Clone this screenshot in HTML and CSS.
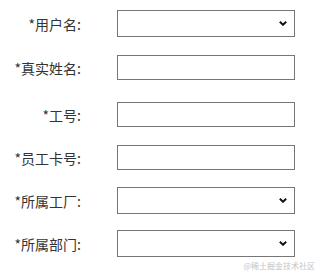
FILE: index.html
```html
<!DOCTYPE html>
<html lang="zh">
<head>
<meta charset="utf-8">
<link rel="stylesheet" href="styles.css">
</head>
<body>
<form class="form">
  <div class="row row-first">
    <label class="label">*用户名:</label>
    <div class="select-wrap">
      <select class="control select"><option></option></select>
      <svg class="chev" width="8" height="5" viewBox="0 0 8 5"><path d="M0.8 0.8 L4 3.8 L7.2 0.8" fill="none" stroke="#111" stroke-width="1.9"/></svg>
    </div>
  </div>
  <div class="row row-wide">
    <label class="label">*真实姓名:</label>
    <input class="control input" type="text">
  </div>
  <div class="row">
    <label class="label">*工号:</label>
    <input class="control input" type="text">
  </div>
  <div class="row">
    <label class="label">*员工卡号:</label>
    <input class="control input" type="text">
  </div>
  <div class="row">
    <label class="label">*所属工厂:</label>
    <div class="select-wrap">
      <select class="control select"><option></option></select>
      <svg class="chev" width="8" height="5" viewBox="0 0 8 5"><path d="M0.8 0.8 L4 3.8 L7.2 0.8" fill="none" stroke="#111" stroke-width="1.9"/></svg>
    </div>
  </div>
  <div class="row">
    <label class="label">*所属部门:</label>
    <div class="select-wrap">
      <select class="control select"><option></option></select>
      <svg class="chev" width="8" height="5" viewBox="0 0 8 5"><path d="M0.8 0.8 L4 3.8 L7.2 0.8" fill="none" stroke="#111" stroke-width="1.9"/></svg>
    </div>
  </div>
</form>
<div class="watermark">@稀土掘金技术社区</div>
</body>
</html>
```

FILE: styles.css
```css
html, body {
  margin: 0;
  padding: 0;
  background: #fff;
}
body {
  width: 323px;
  height: 279px;
  position: relative;
  overflow: hidden;
  font-family: "Noto Sans CJK SC", "Noto Sans", sans-serif;
  color: #333;
}
.form {
  display: flex;
  flex-direction: column;
  padding-top: 2px;
}
.row {
  display: flex;
  align-items: center;
  height: 43px;
}
.row-first {
  margin-bottom: 1px;
}
.row-wide {
  margin-bottom: 4px;
}
.label {
  width: 81px;
  text-align: right;
  font-size: 14px;
  line-height: 20px;
  margin-right: 36px;
}
.control {
  box-sizing: border-box;
  width: 178px;
  margin: 0;
  border: 1px solid #767676;
  border-radius: 0;
  background: #fff;
  font: inherit;
  outline: none;
}
.input {
  height: 25px;
  padding: 0 4px;
}
.select-wrap {
  position: relative;
  display: flex;
}
.select {
  height: 27px;
  -webkit-appearance: none;
  appearance: none;
  padding: 0 20px 0 4px;
}
.chev {
  position: absolute;
  right: 8px;
  top: 11px;
}
.watermark {
  position: absolute;
  right: 8px;
  bottom: 8px;
  font-size: 8px;
  line-height: 10px;
  color: #c4c4c4;
  font-family: "Noto Sans CJK SC", sans-serif;
}
```
